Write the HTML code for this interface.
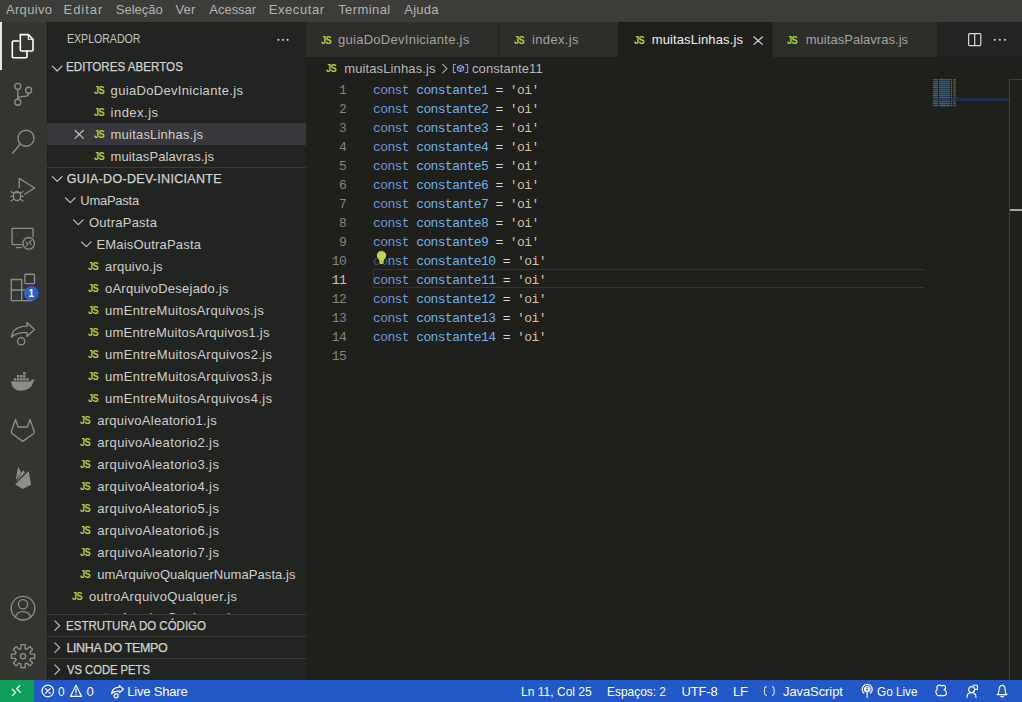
<!DOCTYPE html>
<html><head><meta charset="utf-8">
<style>
*{margin:0;padding:0;box-sizing:border-box}
html,body{width:1022px;height:702px;overflow:hidden;background:#1f1f1c;font-family:"Liberation Sans",sans-serif}
.abs{position:absolute}
.t{position:absolute;white-space:pre}
.js{position:absolute;font:700 11px/8px "Liberation Sans",sans-serif;color:#b3cd3e;letter-spacing:-0.7px;width:14px;white-space:pre;transform:scaleX(0.84);transform-origin:0 0}
#menubar{position:absolute;left:0;top:0;width:1022px;height:22px;background:#3c3c38}
#activity{position:absolute;left:0;top:22px;width:47px;height:658px;background:#343430}
#sidebar{position:absolute;left:47px;top:22px;width:259px;height:658px;background:#222422}
#tabbar{position:absolute;left:306px;top:22px;width:716px;height:35px;background:#222423}
.tab{position:absolute;top:22px;height:35px;background:#2d2d2a}
#editor{position:absolute;left:306px;top:57px;width:716px;height:623px;background:#1f1f1c}
#status{position:absolute;left:0;top:680px;width:1022px;height:22px;background:#2358c8}
#remote{position:absolute;left:0;top:680px;width:34px;height:22px;background:#0f9e5a}
.sep{position:absolute;left:47px;width:259px;height:1px;background:#3b3b38}
.ln{position:absolute;left:305.5px;width:40.6px;text-align:right;font:400 13px/19px "Liberation Mono",monospace;letter-spacing:-0.6px;white-space:pre}
.code{position:absolute;left:373px;font:400 13px/19px "Liberation Mono",monospace;letter-spacing:-0.6px;white-space:pre;color:#d4d4d4}
.kw{color:#7097d8}
.var{color:#6cb4ec}
.op{color:#d8d8d4}
.str{color:#d8c0a4}
svg{position:absolute;overflow:visible}
</style></head><body>
<div id="menubar"></div>
<div id="activity"></div>
<div class="abs" style="left:0;top:22px;width:2px;height:48px;background:#e8e8e8"></div>
<div id="sidebar"></div>
<div id="sbr" class="abs" style="left:305px;top:22px;width:1px;height:658px;background:#20231f"></div>
<div id="sbedge" class="abs" style="left:47px;top:22px;width:1px;height:658px;background:#1d1e1c"></div>
<div class="abs" style="left:47px;top:123px;width:259px;height:22px;background:#38373c"></div>
<div class="sep" style="top:167px"></div>
<div class="sep" style="top:614px"></div>
<div class="sep" style="top:636px"></div>
<div class="sep" style="top:658px"></div>
<div id="tabbar"></div>
<div class="tab" style="left:306px;width:192px"></div>
<div class="tab" style="left:499px;width:119px"></div>
<div class="tab" style="left:618px;width:154px;background:#1f1f1c"></div>
<div class="tab" style="left:773px;width:164px"></div>
<div id="editor"></div>
<div id="tbline" class="abs" style="left:937px;top:57px;width:85px;height:1px;background:repeating-linear-gradient(90deg,#1a1b1b 0 2px,#222221 2px 3px)"></div>
<!-- current line -->
<div class="abs" style="left:373px;top:269px;width:552px;height:19px;border:1px solid #33332f;border-right:none"></div>
<!-- minimap -->
<div class="abs" style="left:933px;top:79px;width:5px;height:28px;background:repeating-linear-gradient(#41597f 0 1px,#2c3646 1px 2px)"></div>
<div class="abs" style="left:939px;top:79px;width:11px;height:28px;background:repeating-linear-gradient(#2c6282 0 1px,#213a4a 1px 2px)"></div>
<div class="abs" style="left:950.5px;top:79px;width:1.5px;height:28px;background:repeating-linear-gradient(#6a6a66 0 1px,#3a3a36 1px 2px)"></div>
<div class="abs" style="left:953px;top:79px;width:3px;height:28px;background:repeating-linear-gradient(#5e4838 0 1px,#3c3228 1px 2px)"></div>
<div class="abs" style="left:933px;top:98px;width:77px;height:3px;background:rgba(40,50,90,0.75)"></div>
<!-- scrollbar -->
<div class="abs" style="left:1009px;top:79px;width:1px;height:601px;background:#3e3e3a"></div>
<div class="abs" style="left:1009px;top:79px;width:13px;height:1px;background:#3e3e3a"></div>
<div class="abs" style="left:1010px;top:209px;width:12px;height:2px;background:#a5a5a0"></div>
<div id="status"></div>
<div id="remote"></div>
<div class="t" style="left:6.00px;top:2.00px;font:400 13px/15px 'Liberation Sans', sans-serif;color:#b4b4ae;letter-spacing:0.309px;">Arquivo</div>
<div class="t" style="left:63.60px;top:2.00px;font:400 13px/15px 'Liberation Sans', sans-serif;color:#b4b4ae;letter-spacing:0.934px;">Editar</div>
<div class="t" style="left:115.80px;top:2.00px;font:400 13px/15px 'Liberation Sans', sans-serif;color:#b4b4ae;letter-spacing:-0.008px;">Seleção</div>
<div class="t" style="left:175.50px;top:2.00px;font:400 13px/15px 'Liberation Sans', sans-serif;color:#b4b4ae;letter-spacing:0.108px;">Ver</div>
<div class="t" style="left:209.30px;top:2.00px;font:400 13px/15px 'Liberation Sans', sans-serif;color:#b4b4ae;letter-spacing:-0.022px;">Acessar</div>
<div class="t" style="left:268.70px;top:2.00px;font:400 13px/15px 'Liberation Sans', sans-serif;color:#b4b4ae;letter-spacing:0.590px;">Executar</div>
<div class="t" style="left:338.20px;top:2.00px;font:400 13px/15px 'Liberation Sans', sans-serif;color:#b4b4ae;letter-spacing:0.409px;">Terminal</div>
<div class="t" style="left:404.30px;top:2.00px;font:400 13px/15px 'Liberation Sans', sans-serif;color:#b4b4ae;letter-spacing:0.220px;">Ajuda</div>
<div class="t" style="left:67.40px;top:32.34px;font:400 12px/14px 'Liberation Sans', sans-serif;color:#c4c4be;letter-spacing:0.000px;transform:scaleX(0.8806);transform-origin:0.00px 0;">EXPLORADOR</div>
<div class="t" style="left:66.40px;top:60.17px;font:400 12.5px/14px 'Liberation Sans', sans-serif;color:#d4d4ce;letter-spacing:0.000px;transform:scaleX(0.9289);transform-origin:1.00px 0;-webkit-text-stroke:0.25px #d4d4ce;">EDITORES ABERTOS</div>
<div class="t" style="left:110.60px;top:83.00px;font:400 13px/15px 'Liberation Sans', sans-serif;color:#cfcfc9;letter-spacing:0.328px;">guiaDoDevIniciante.js</div>
<div class="t" style="left:110.60px;top:105.00px;font:400 13px/15px 'Liberation Sans', sans-serif;color:#cfcfc9;letter-spacing:0.475px;">index.js</div>
<div class="t" style="left:110.60px;top:127.00px;font:400 13px/15px 'Liberation Sans', sans-serif;color:#cfcfc9;letter-spacing:0.200px;">muitasLinhas.js</div>
<div class="t" style="left:110.60px;top:149.00px;font:400 13px/15px 'Liberation Sans', sans-serif;color:#cfcfc9;letter-spacing:0.090px;">muitasPalavras.js</div>
<div class="t" style="left:66.80px;top:172.17px;font:400 12.5px/14px 'Liberation Sans', sans-serif;color:#d4d4ce;letter-spacing:0.311px;-webkit-text-stroke:0.25px #d4d4ce;">GUIA-DO-DEV-INICIANTE</div>
<div class="t" style="left:80.30px;top:193.30px;font:400 13px/15px 'Liberation Sans', sans-serif;color:#cfcfc9;letter-spacing:-0.266px;">UmaPasta</div>
<div class="t" style="left:89.00px;top:215.30px;font:400 13px/15px 'Liberation Sans', sans-serif;color:#cfcfc9;letter-spacing:0.242px;">OutraPasta</div>
<div class="t" style="left:96.40px;top:237.30px;font:400 13px/15px 'Liberation Sans', sans-serif;color:#cfcfc9;letter-spacing:0.190px;">EMaisOutraPasta</div>
<div class="t" style="left:105.00px;top:259.30px;font:400 13px/15px 'Liberation Sans', sans-serif;color:#cfcfc9;letter-spacing:0.207px;">arquivo.js</div>
<div class="t" style="left:105.00px;top:281.30px;font:400 13px/15px 'Liberation Sans', sans-serif;color:#cfcfc9;letter-spacing:0.237px;">oArquivoDesejado.js</div>
<div class="t" style="left:105.00px;top:303.30px;font:400 13px/15px 'Liberation Sans', sans-serif;color:#cfcfc9;letter-spacing:0.339px;">umEntreMuitosArquivos.js</div>
<div class="t" style="left:105.00px;top:325.30px;font:400 13px/15px 'Liberation Sans', sans-serif;color:#cfcfc9;letter-spacing:0.261px;">umEntreMuitosArquivos1.js</div>
<div class="t" style="left:105.00px;top:347.30px;font:400 13px/15px 'Liberation Sans', sans-serif;color:#cfcfc9;letter-spacing:0.365px;">umEntreMuitosArquivos2.js</div>
<div class="t" style="left:105.00px;top:369.30px;font:400 13px/15px 'Liberation Sans', sans-serif;color:#cfcfc9;letter-spacing:0.365px;">umEntreMuitosArquivos3.js</div>
<div class="t" style="left:105.00px;top:391.30px;font:400 13px/15px 'Liberation Sans', sans-serif;color:#cfcfc9;letter-spacing:0.365px;">umEntreMuitosArquivos4.js</div>
<div class="t" style="left:97.20px;top:413.30px;font:400 13px/15px 'Liberation Sans', sans-serif;color:#cfcfc9;letter-spacing:0.280px;">arquivoAleatorio1.js</div>
<div class="t" style="left:97.20px;top:435.30px;font:400 13px/15px 'Liberation Sans', sans-serif;color:#cfcfc9;letter-spacing:0.396px;">arquivoAleatorio2.js</div>
<div class="t" style="left:97.20px;top:457.30px;font:400 13px/15px 'Liberation Sans', sans-serif;color:#cfcfc9;letter-spacing:0.396px;">arquivoAleatorio3.js</div>
<div class="t" style="left:97.20px;top:479.30px;font:400 13px/15px 'Liberation Sans', sans-serif;color:#cfcfc9;letter-spacing:0.396px;">arquivoAleatorio4.js</div>
<div class="t" style="left:97.20px;top:501.30px;font:400 13px/15px 'Liberation Sans', sans-serif;color:#cfcfc9;letter-spacing:0.396px;">arquivoAleatorio5.js</div>
<div class="t" style="left:97.20px;top:523.30px;font:400 13px/15px 'Liberation Sans', sans-serif;color:#cfcfc9;letter-spacing:0.396px;">arquivoAleatorio6.js</div>
<div class="t" style="left:97.20px;top:545.30px;font:400 13px/15px 'Liberation Sans', sans-serif;color:#cfcfc9;letter-spacing:0.396px;">arquivoAleatorio7.js</div>
<div class="t" style="left:97.20px;top:567.30px;font:400 13px/15px 'Liberation Sans', sans-serif;color:#cfcfc9;letter-spacing:0.063px;">umArquivoQualquerNumaPasta.js</div>
<div class="t" style="left:89.00px;top:589.30px;font:400 13px/15px 'Liberation Sans', sans-serif;color:#cfcfc9;letter-spacing:0.383px;">outroArquivoQualquer.js</div>
<div class="t" style="left:66.40px;top:618.97px;font:400 12.5px/14px 'Liberation Sans', sans-serif;color:#d4d4ce;letter-spacing:0.000px;transform:scaleX(0.9200);transform-origin:1.00px 0;-webkit-text-stroke:0.25px #d4d4ce;">ESTRUTURA DO CÓDIGO</div>
<div class="t" style="left:66.40px;top:640.97px;font:400 12.5px/14px 'Liberation Sans', sans-serif;color:#d4d4ce;letter-spacing:-0.357px;-webkit-text-stroke:0.25px #d4d4ce;">LINHA DO TEMPO</div>
<div class="t" style="left:67.40px;top:662.97px;font:400 12.5px/14px 'Liberation Sans', sans-serif;color:#d4d4ce;letter-spacing:0.000px;transform:scaleX(0.8974);transform-origin:0.00px 0;-webkit-text-stroke:0.25px #d4d4ce;">VS CODE PETS</div>
<div class="t" style="left:338.00px;top:31.80px;font:400 13px/15px 'Liberation Sans', sans-serif;color:#a3a39d;letter-spacing:0.273px;">guiaDoDevIniciante.js</div>
<div class="t" style="left:532.00px;top:31.80px;font:400 13px/15px 'Liberation Sans', sans-serif;color:#a3a39d;letter-spacing:0.346px;">index.js</div>
<div class="t" style="left:651.70px;top:31.80px;font:400 13px/15px 'Liberation Sans', sans-serif;color:#eeeeea;letter-spacing:0.114px;">muitasLinhas.js</div>
<div class="t" style="left:805.70px;top:31.80px;font:400 13px/15px 'Liberation Sans', sans-serif;color:#a3a39d;letter-spacing:0.033px;">muitasPalavras.js</div>
<div class="t" style="left:344.20px;top:61.00px;font:400 13px/15px 'Liberation Sans', sans-serif;color:#b9b9b3;letter-spacing:0.122px;">muitasLinhas.js</div>
<div class="t" style="left:472.00px;top:61.00px;font:400 13px/15px 'Liberation Sans', sans-serif;color:#b9b9b3;letter-spacing:0.076px;">constante11</div>
<div class="t" style="left:58.30px;top:684.00px;font:400 13px/15px 'Liberation Sans', sans-serif;color:#ffffff;letter-spacing:0.000px;transform:scaleX(0.9000);transform-origin:0.00px 0;">0</div>
<div class="t" style="left:86.50px;top:684.00px;font:400 13px/15px 'Liberation Sans', sans-serif;color:#ffffff;letter-spacing:0.000px;">0</div>
<div class="t" style="left:127.20px;top:684.00px;font:400 13px/15px 'Liberation Sans', sans-serif;color:#ffffff;letter-spacing:-0.180px;">Live Share</div>
<div class="t" style="left:520.50px;top:684.00px;font:400 13px/15px 'Liberation Sans', sans-serif;color:#ffffff;letter-spacing:0.000px;transform:scaleX(0.9250);transform-origin:1.00px 0;">Ln 11, Col 25</div>
<div class="t" style="left:606.50px;top:684.00px;font:400 13px/15px 'Liberation Sans', sans-serif;color:#ffffff;letter-spacing:0.000px;transform:scaleX(0.9146);transform-origin:1.00px 0;">Espaços: 2</div>
<div class="t" style="left:681.50px;top:684.00px;font:400 13px/15px 'Liberation Sans', sans-serif;color:#ffffff;letter-spacing:-0.175px;">UTF-8</div>
<div class="t" style="left:733.00px;top:684.00px;font:400 13px/15px 'Liberation Sans', sans-serif;color:#ffffff;letter-spacing:-0.230px;">LF</div>
<div class="t" style="left:783.00px;top:684.00px;font:400 13px/15px 'Liberation Sans', sans-serif;color:#ffffff;letter-spacing:-0.086px;">JavaScript</div>
<div class="t" style="left:877.40px;top:684.00px;font:400 13px/15px 'Liberation Sans', sans-serif;color:#ffffff;letter-spacing:0.000px;transform:scaleX(0.9042);transform-origin:0.00px 0;">Go Live</div>
<div class="abs" style="left:47px;top:607px;width:259px;height:7px;overflow:hidden"><div class="abs" style="left:-47px;top:-607px;width:1022px;height:702px"><div class="t" style="margin-top:20.8px;left:89.00px;top:589.30px;font:400 13px/15px 'Liberation Sans', sans-serif;color:#cfcfc9;letter-spacing:0.383px;">outroArquivoQualquer.js</div></div></div>
<div class="js" style="left:93.5px;top:85.5px">JS</div>
<div class="js" style="left:93.5px;top:107.5px">JS</div>
<div class="js" style="left:93.5px;top:129.5px">JS</div>
<div class="js" style="left:93.5px;top:151.5px">JS</div>
<div class="js" style="left:87.5px;top:261.8px">JS</div>
<div class="js" style="left:87.5px;top:283.8px">JS</div>
<div class="js" style="left:87.5px;top:305.8px">JS</div>
<div class="js" style="left:87.5px;top:327.8px">JS</div>
<div class="js" style="left:87.5px;top:349.8px">JS</div>
<div class="js" style="left:87.5px;top:371.8px">JS</div>
<div class="js" style="left:87.5px;top:393.8px">JS</div>
<div class="js" style="left:79.7px;top:415.8px">JS</div>
<div class="js" style="left:79.7px;top:437.8px">JS</div>
<div class="js" style="left:79.7px;top:459.8px">JS</div>
<div class="js" style="left:79.7px;top:481.8px">JS</div>
<div class="js" style="left:79.7px;top:503.79999999999995px">JS</div>
<div class="js" style="left:79.7px;top:525.8px">JS</div>
<div class="js" style="left:79.7px;top:547.8px">JS</div>
<div class="js" style="left:79.7px;top:569.8px">JS</div>
<div class="js" style="left:71.5px;top:591.8px">JS</div>
<div class="js" style="left:320.5px;top:35.7px">JS</div>
<div class="js" style="left:513.7px;top:35.7px">JS</div>
<div class="js" style="left:633.7px;top:35.7px">JS</div>
<div class="js" style="left:787.3px;top:35.7px">JS</div>
<div class="js" style="left:326.2px;top:63.5px">JS</div>
<svg width="1022" height="702" viewBox="0 0 1022 702" style="position:absolute;left:0;top:0" fill="none" stroke-linecap="round" stroke-linejoin="round">
<!-- ===== activity bar ===== -->
<g stroke="#ffffff" stroke-width="1.6">
  <path d="M18.5 41 H13.5 Q12.3 41 12.3 42.2 V56.6 Q12.3 57.8 13.5 57.8 H25.8 Q27 57.8 27 56.6 V51.3"/>
  <path d="M20.3 34.6 H28.3 L33 39.3 V49.8 Q33 51 31.8 51 H21.5 Q20.3 51 20.3 49.8 Z"/>
  <path d="M28.3 34.6 V39.3 H33" stroke-width="1.1"/>
</g>
<g stroke="#8d8d8c" stroke-width="1.35">
  <!-- scm -->
  <circle cx="17.8" cy="86.3" r="3"/>
  <circle cx="17.8" cy="102.2" r="3"/>
  <circle cx="28.6" cy="90.2" r="3"/>
  <path d="M17.8 89.3 V99.2"/>
  <path d="M28.6 93.2 Q28.6 96 25 96.3 L21 96.6 Q17.8 97 17.8 99.2"/>
  <!-- search -->
  <circle cx="26" cy="138.2" r="8"/>
  <path d="M20.4 144 L12.6 153.3"/>
  <!-- debug -->
  <path d="M19.2 187.5 V178.4 L34.6 188 L24.6 194.3"/>
  <ellipse cx="17" cy="196" rx="3.6" ry="4.6"/>
  <path d="M13.6 193.2 L11 191.5 M13.2 196.3 H10.8 M13.6 199.2 L11 201 M20.4 193.2 L23 191.5 M20.8 196.3 H23.2 M20.4 199.2 L23 201 M14 192.6 H20" stroke-width="1.2"/>
  <!-- remote explorer -->
  <path d="M21.6 244.6 H12.8 Q12.1 244.6 12.1 243.9 V229.1 Q12.1 228.4 12.8 228.4 H32.4 Q33.1 228.4 33.1 229.1 V236.8"/>
  <path d="M16.4 247.6 H21.3"/>
  <circle cx="28.7" cy="243.3" r="5.8"/>
  <path d="M26 242.2 L28 244.2 L26.1 246.2 M31.2 240.6 L29.2 242.6 L31.3 244.6" stroke-width="1.1"/>
  <!-- extensions -->
  <path d="M11.3 279.5 H21.7 V300.6 H11.3 Z M11.3 290 H32 V300.6 H21.7"/>
  <rect x="24.9" y="274.2" width="9.6" height="9.4" rx="0.8"/>
  <!-- live share -->
  <path d="M11.6 337.2 Q12 328.5 22.5 326.4 L27 326.2 V322.6 L34.4 329.5 L27 336.4 V332.6 L23 332.7 Q15.8 333 11.6 337.2 Z"/>
  <circle cx="21.2" cy="341.2" r="3.6"/>
  <!-- gitlab -->
  <path d="M15.6 419.4 L11.4 431.2 Q11 432.8 12.2 433.8 L22.8 441.4 L33.4 433.8 Q34.6 432.8 34.2 431.2 L30 419.4 L27.5 427 H18.1 Z"/>
  <!-- account -->
  <circle cx="23" cy="608.2" r="11.8"/>
  <circle cx="23" cy="604.2" r="4.6"/>
  <path d="M15.4 617.2 Q16.8 611.6 23 611.6 Q29.2 611.6 30.6 617.2"/>
  <!-- settings -->
  <circle cx="23" cy="656.2" r="2.6"/>
</g>
<path d="M30.59 654.02 L34.62 654.15 L34.62 658.25 L30.59 658.38 L29.91 660.03 L32.67 662.97 L29.77 665.87 L26.83 663.11 L25.18 663.79 L25.05 667.82 L20.95 667.82 L20.82 663.79 L19.17 663.11 L16.23 665.87 L13.33 662.97 L16.09 660.03 L15.41 658.38 L11.38 658.25 L11.38 654.15 L15.41 654.02 L16.09 652.37 L13.33 649.43 L16.23 646.53 L19.17 649.29 L20.82 648.61 L20.95 644.58 L25.05 644.58 L25.18 648.61 L26.83 649.29 L29.77 646.53 L32.67 649.43 L29.91 652.37 Z" stroke="#8e8e8c" stroke-width="1.4"/>
<!-- docker (filled) -->
<g fill="#8d8d8c">
  <path d="M11 381.5 H30.5 Q31.5 379.6 33.2 379.2 Q34.4 379.4 34.6 380 Q33.4 381 33 382.5 Q31.6 389.8 20.6 390.8 Q12.6 391 11 381.5 Z"/>
  <rect x="13.8" y="378.2" width="2.5" height="2.4"/><rect x="16.9" y="378.2" width="2.5" height="2.4"/><rect x="20" y="378.2" width="2.5" height="2.4"/><rect x="23.1" y="378.2" width="2.5" height="2.4"/><rect x="26.2" y="378.2" width="2.5" height="2.4"/>
  <rect x="16.9" y="375.1" width="2.5" height="2.4"/><rect x="20" y="375.1" width="2.5" height="2.4"/><rect x="23.1" y="375.1" width="2.5" height="2.4"/>
  <rect x="23.1" y="372" width="2.5" height="2.4"/>
  <!-- firebase -->
  <path d="M15.6 480.2 L18.2 466.8 L21.2 472.4 Z"/>
  <path d="M16.2 481.8 L23 470 L25 472.6 Z"/>
  <path d="M15.2 484.4 L28.6 471 L31.2 484.8 L22.8 489 Z"/>
</g>
<!-- badge -->
<circle cx="31.3" cy="293.3" r="7.3" fill="#2b5fcb"/>
<text x="31.3" y="297" font-family="Liberation Sans" font-weight="700" font-size="10" fill="#ffffff" text-anchor="middle">1</text>
<!-- ===== sidebar ===== -->
<g stroke="#c2c2bc" stroke-width="1.2">
  <path d="M52.4 66.2 L57.2 71 L62 66.2"/>
  <path d="M52.4 176.6 L57.2 181.4 L62 176.6"/>
  <path d="M65.5 197.8 L70.3 202.6 L75.1 197.8"/>
  <path d="M73.5 219.8 L78.3 224.6 L83.1 219.8"/>
  <path d="M81.5 241.8 L86.3 246.6 L91.1 241.8"/>
  <path d="M54.8 620.8 L59.6 625.6 L54.8 630.4"/>
  <path d="M54.8 642.8 L59.6 647.6 L54.8 652.4"/>
  <path d="M54.8 664.8 L59.6 669.6 L54.8 674.4"/>
  <path d="M75 130.3 L83.4 138.4 M83.4 130.3 L75 138.4"/>
</g>
<g fill="#c8c8c2">
  <circle cx="278.4" cy="39.8" r="1.1"/><circle cx="283" cy="39.8" r="1.1"/><circle cx="287.6" cy="39.8" r="1.1"/>
  <circle cx="994.7" cy="39.8" r="1.1"/><circle cx="999.8" cy="39.8" r="1.1"/><circle cx="1004.9" cy="39.8" r="1.1"/>
</g>
<!-- ===== editor ===== -->
<g stroke="#d8d8d4" stroke-width="1.2">
  <path d="M754 37 L762.4 44.4 M762.4 37 L754 44.4"/>
  <rect x="968.6" y="33.6" width="12.2" height="12" rx="1"/>
  <path d="M974.7 33.6 V45.6"/>
</g>
<path d="M442.6 64.4 L447 68.6 L442.6 72.8" stroke="#b0b0aa" stroke-width="1.1"/>
<g stroke="#8a9ae8" stroke-width="1.1">
  <path d="M455.6 64.5 H453.4 V72.5 H455.6 M465.4 64.5 H467.6 V72.5 H465.4"/>
  <path d="M457.4 67 L460.5 65.3 L463.6 67 V70 L460.5 71.7 L457.4 70 Z M457.4 67 L460.5 68.6 L463.6 67 M460.5 68.6 V71.7"/>
</g>
<!-- ===== status bar ===== -->
<g stroke="#ffffff" stroke-width="1.2">
  <path d="M12.2 689.2 L15.6 692.4 L12.3 695.6 M19.8 685.6 L16.6 688.8 L20.2 692.3" stroke-width="1.3"/>
  <circle cx="47.8" cy="691" r="5.8"/>
  <path d="M45.4 688.6 L50.2 693.4 M50.2 688.6 L45.4 693.4"/>
  <path d="M76 685.2 L81.6 696.4 H70.4 Z"/>
  <path d="M76 689 V692.6 M76 694.4 V694.6"/>
  <path d="M111.6 693.5 Q112.4 688 117.8 687.3 L119.4 687.2 V685.6 L123.4 689.2 L119.4 692.8 V691 L117.8 691.1 Q114.2 691.3 111.6 693.5"/>
  <circle cx="116.2" cy="695.8" r="2"/>
  <path d="M766.4 686.6 Q764.6 686.6 764.6 688.4 V689.6 Q764.6 691 763.8 691 Q764.6 691 764.6 692.4 V693.6 Q764.6 695.4 766.4 695.4 M772.2 686.6 Q774 686.6 774 688.4 V689.6 Q774 691 774.8 691 Q774 691 774 692.4 V693.6 Q774 695.4 772.2 695.4" stroke-width="1"/>
  <circle cx="867.2" cy="689.6" r="1.6"/>
  <path d="M863.8 693 A5 5 0 1 1 870.6 693 M865.6 691.6 A2.8 2.8 0 1 1 868.8 691.6"/>
  <path d="M867.2 691.4 V697.4"/>
  <path d="M937.6 685.6 Q936 687.8 937.4 689.4 Q935 690.4 936.2 693 Q936.6 696 939.6 695.6 H944 Q946.6 695.4 946.4 692.6 Q946.2 690.2 944 689.8 Q946.4 688.4 945.2 686.2 Q943.6 684.6 941.6 686 Q940.2 684.4 937.6 685.6 Z" stroke-width="1.1"/>
  <path d="M967 697.4 Q967 692.6 971.6 692.6 Q975.6 692.6 976 697.4 M971.6 692.6 A3 3 0 1 0 971.6 686.6 A3 3 0 1 0 971.6 692.6 M973 685.2 H977.4 V689.4 H975.6" stroke-width="1.1"/>
  <path d="M997.2 694.6 H1007 Q1005.2 693 1005.2 690.4 Q1005.2 685.4 1002.1 685.4 Q999 685.4 999 690.4 Q999 693 997.2 694.6 Z M1000.8 696.6 H1003.4" stroke-width="1.1"/>
</g>
</svg>

<div class="ln" style="top:81px;color:#858580">1</div>
<div class="code" style="top:81px"><span class="kw">const</span> <span class="var">constante1</span> <span class="op">=</span> <span class="str">'oi'</span></div>
<div class="ln" style="top:100px;color:#858580">2</div>
<div class="code" style="top:100px"><span class="kw">const</span> <span class="var">constante2</span> <span class="op">=</span> <span class="str">'oi'</span></div>
<div class="ln" style="top:119px;color:#858580">3</div>
<div class="code" style="top:119px"><span class="kw">const</span> <span class="var">constante3</span> <span class="op">=</span> <span class="str">'oi'</span></div>
<div class="ln" style="top:138px;color:#858580">4</div>
<div class="code" style="top:138px"><span class="kw">const</span> <span class="var">constante4</span> <span class="op">=</span> <span class="str">'oi'</span></div>
<div class="ln" style="top:157px;color:#858580">5</div>
<div class="code" style="top:157px"><span class="kw">const</span> <span class="var">constante5</span> <span class="op">=</span> <span class="str">'oi'</span></div>
<div class="ln" style="top:176px;color:#858580">6</div>
<div class="code" style="top:176px"><span class="kw">const</span> <span class="var">constante6</span> <span class="op">=</span> <span class="str">'oi'</span></div>
<div class="ln" style="top:195px;color:#858580">7</div>
<div class="code" style="top:195px"><span class="kw">const</span> <span class="var">constante7</span> <span class="op">=</span> <span class="str">'oi'</span></div>
<div class="ln" style="top:214px;color:#858580">8</div>
<div class="code" style="top:214px"><span class="kw">const</span> <span class="var">constante8</span> <span class="op">=</span> <span class="str">'oi'</span></div>
<div class="ln" style="top:233px;color:#858580">9</div>
<div class="code" style="top:233px"><span class="kw">const</span> <span class="var">constante9</span> <span class="op">=</span> <span class="str">'oi'</span></div>
<div class="ln" style="top:252px;color:#858580">10</div>
<div class="code" style="top:252px"><span style="color:#45577a">co</span><span class="kw">nst</span> <span class="var">constante10</span> <span class="op">=</span> <span class="str">'oi'</span></div>
<div class="ln" style="top:271px;color:#c6c6c6">11</div>
<div class="code" style="top:271px"><span class="kw">const</span> <span class="var">constante11</span> <span class="op">=</span> <span class="str">'oi'</span></div>
<div class="ln" style="top:290px;color:#858580">12</div>
<div class="code" style="top:290px"><span class="kw">const</span> <span class="var">constante12</span> <span class="op">=</span> <span class="str">'oi'</span></div>
<div class="ln" style="top:309px;color:#858580">13</div>
<div class="code" style="top:309px"><span class="kw">const</span> <span class="var">constante13</span> <span class="op">=</span> <span class="str">'oi'</span></div>
<div class="ln" style="top:328px;color:#858580">14</div>
<div class="code" style="top:328px"><span class="kw">const</span> <span class="var">constante14</span> <span class="op">=</span> <span class="str">'oi'</span></div>
<div class="ln" style="top:347px;color:#858580">15</div>
<svg width="1022" height="702" style="position:absolute;left:0;top:0">
<path d="M381.5 250.6 C384.6 250.6 386.6 252.8 386.6 255.6 C386.6 257.6 385.4 258.8 384.3 259.9 L384 263.6 Q384 264.4 383.2 264.4 H379.8 Q379 264.4 379 263.6 L378.7 259.9 C377.6 258.8 376.4 257.6 376.4 255.6 C376.4 252.8 378.4 250.6 381.5 250.6 Z" fill="#c3d64e" stroke="#1f1a14" stroke-width="1"/>
<path d="M380.2 261.5 H382.8" stroke="#8c9a3a" stroke-width="0.8"/>
</svg>
</body></html>
